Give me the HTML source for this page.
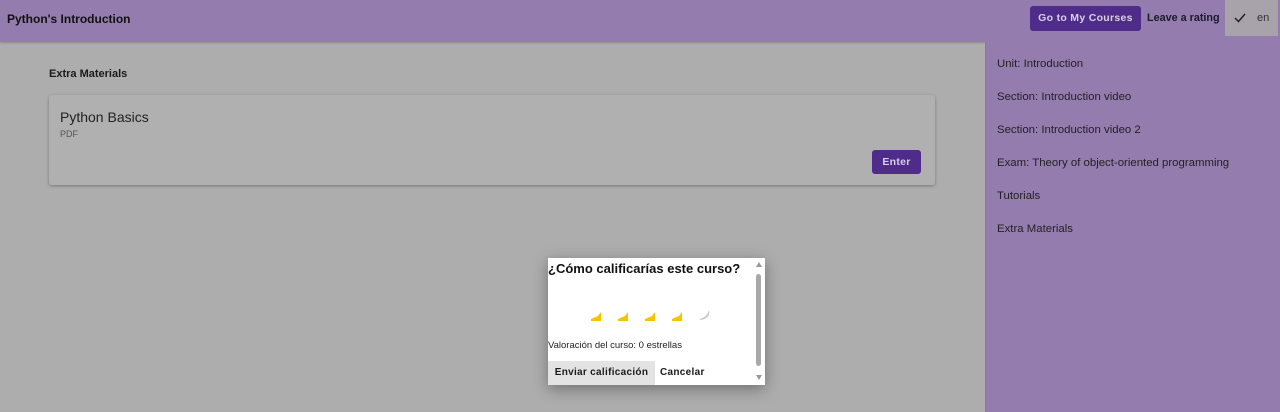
<!DOCTYPE html>
<html><head><meta charset="utf-8"><style>
*{margin:0;padding:0;box-sizing:border-box}
body{width:1280px;height:412px;overflow:hidden;background:#adadad;font-family:"Liberation Sans",sans-serif;position:relative;color:#1a1a1a}
.hdr{position:absolute;left:0;top:0;width:1280px;height:42px;background:#947cae;box-shadow:0 1px 2px rgba(0,0,0,.2)}
.title{position:absolute;left:7px;top:12px;font-size:12px;font-weight:bold;color:#111}
.btn{position:absolute;background:#4f2c8a;color:#d9d0e6;font-size:10.5px;font-weight:bold;border-radius:3px;text-align:center;letter-spacing:.3px}
.side{position:absolute;left:985px;top:42px;width:295px;height:370px;background:#947cae;border-left:1px solid #8a75a2}
.side div{position:absolute;left:11px;font-size:11.4px;color:#222}
.card{position:absolute;left:49px;top:95px;width:886px;height:90px;background:#b0b0b0;border-radius:3px;box-shadow:0 1px 3px rgba(0,0,0,.3)}
.dlg{position:absolute;left:548px;top:258px;width:217px;height:127px;background:#fff;box-shadow:0 4px 14px rgba(0,0,0,.35)}
</style></head><body>
<div class="hdr">
<div class="title">Python's Introduction</div>
<div class="btn" style="left:1030px;top:6px;width:111px;height:25px;line-height:25px">Go to My Courses</div>
<div style="position:absolute;left:1147px;top:12px;font-size:10.8px;font-weight:bold;color:#1a1a2a">Leave a rating</div>
<div style="position:absolute;left:1225px;top:0;width:53px;height:36px;background:#a8a3ab"><svg style="position:absolute;left:9px;top:13px" width="12" height="10"><path d="M1 5 L4.5 8.5 L11 1" stroke="#222" stroke-width="1.5" fill="none"/></svg><span style="position:absolute;left:32px;top:12px;font-size:11px;color:#333">en</span></div>
</div>
<div style="position:absolute;left:49px;top:68px;font-size:11px;font-weight:bold">Extra Materials</div>
<div class="card">
<div style="position:absolute;left:11px;top:14px;font-size:14px;color:#222">Python Basics</div>
<div style="position:absolute;left:11px;top:34px;font-size:9px;color:#555">PDF</div>
<div class="btn" style="left:823px;top:55px;width:49px;height:24px;line-height:24px">Enter</div>
</div>
<div class="side">
<div style="top:16px">Unit: Introduction</div>
<div style="top:49px">Section: Introduction video</div>
<div style="top:82px">Section: Introduction video 2</div>
<div style="top:115px">Exam: Theory of object-oriented programming</div>
<div style="top:148px">Tutorials</div>
<div style="top:181px">Extra Materials</div>
</div>
<div class="dlg">
<div style="position:absolute;left:0;top:3px;font-size:13px;font-weight:bold;color:#111">¿Cómo calificarías este curso?</div>
<svg style="position:absolute;left:40px;top:46px" width="140" height="20">
<g fill="#f5c400"><path d="M3 15 L10 12 L13 8 L13 17 L3 17Z"/><path d="M30 15 L37 12 L40 8 L40 17 L30 17Z"/><path d="M57 15 L64 12 L67 8 L67 17 L57 17Z"/><path d="M84 15 L91 12 L94 8 L94 17 L84 17Z"/></g>
<path d="M112 15 Q119 13 121 6 Q123 15 112 16Z" fill="#ccc"/></svg>
<div style="position:absolute;left:0;top:82px;font-size:9.5px;color:#222">Valoración del curso: 0 estrellas</div>
<div style="position:absolute;left:0;top:103px;width:107px;height:24px;background:#e3e3e3;font-size:10px;font-weight:bold;line-height:24px;text-align:center;letter-spacing:.3px">Enviar calificación</div>
<div style="position:absolute;left:112px;top:103px;height:24px;font-size:10px;font-weight:bold;line-height:24px;letter-spacing:.3px">Cancelar</div>
<div style="position:absolute;left:208px;top:16px;width:5px;height:92px;background:#a9a9a9;border-radius:3px"></div>
<div style="position:absolute;left:208px;top:4px;width:0;height:0;border:3px solid transparent;border-bottom:5px solid #999;border-top:0"></div>
<div style="position:absolute;left:208px;top:117px;width:0;height:0;border:3px solid transparent;border-top:5px solid #999;border-bottom:0"></div>
</div>
</body></html>
